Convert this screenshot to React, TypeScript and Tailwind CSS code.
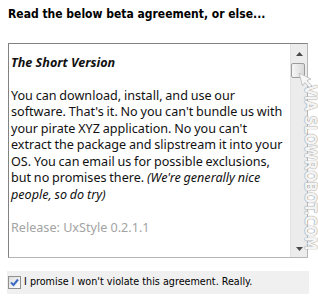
import React from 'react';

const tahoma = { fontFamily: 'Tahoma, "DejaVu Sans Condensed", sans-serif' };
const segoe = { fontFamily: '"Segoe UI", "Noto Sans", sans-serif' };

const lines = [
  'You can download, install, and use our',
  "software. That's it. No you can't bundle us with",
  "your pirate XYZ application. No you can't",
  'extract the package and slipstream it into your',
  'OS. You can email us for possible exclusions,',
];

const App: React.FC = () => {
  return (
    <div className="relative w-[318px] h-[302px] bg-white overflow-hidden">
      {/* Heading */}
      <div className="pl-2 pt-[5px] h-[43px] text-[12px] font-bold text-black" style={tahoma}>
        Read the below beta agreement, or else...
      </div>

      {/* Agreement box */}
      <div className="ml-2 w-[300px] h-[215px] flex overflow-hidden border border-[#b5b5b5] border-t-[#828282] border-l-[#828282]">
        <div className="flex-1 pl-[2px] pt-[11px] text-[12.6px] leading-[16.5px] text-[#111] whitespace-nowrap" style={segoe}>
          <p className="font-bold italic">The Short Version</p>
          <div className="mt-[16px] [word-spacing:-0.5px]">
            {lines.map((l) => (
              <p key={l}>{l}</p>
            ))}
            <p>
              but no promises there. <span className="italic">(We're generally nice</span>
            </p>
            <p className="italic">people, so do try)</p>
          </div>
          <p className="mt-[17px] text-[#a3a3a3]">Release: UxStyle 0.2.1.1</p>
        </div>

        {/* Scrollbar */}
        <div className="w-[17px] flex flex-col bg-[#ececec] border-l border-[#e2e2e2]">
          <div className="h-[19px] flex items-center justify-center">
            <svg width="7" height="4" viewBox="0 0 7 4"><path d="M3.5 0 L7 4 L0 4 Z" fill="#4a4a4a" /></svg>
          </div>
          <div className="mr-[2px] h-[15px] rounded-[2px] border border-[#9c9c9c] bg-gradient-to-r from-[#f6f6f6] to-[#d9d9d9]" />
          <div className="flex-1" />
          <div className="h-[17px] flex items-center justify-center">
            <svg width="7" height="4" viewBox="0 0 7 4"><path d="M0 0 L7 0 L3.5 4 Z" fill="#4a4a4a" /></svg>
          </div>
        </div>
      </div>

      {/* Checkbox strip */}
      <div className="mt-[13px] ml-[7px] w-[302px] h-[23px] bg-[#f0f0f0] flex items-center gap-[3px] pl-[1px]">
        <div className="w-[13px] h-[13px] border border-[#8e8f8f] bg-gradient-to-br from-[#dedede] to-white flex items-center justify-center">
          <svg width="9" height="9" viewBox="0 0 9 9"><path d="M1 4.5 L3.5 7 L8 1.5" stroke="#3d6cc4" strokeWidth="2" fill="none" /></svg>
        </div>
        <span className="text-[10.7px] text-black" style={tahoma}>
          I promise I won't violate this agreement. Really.
        </span>
      </div>

      {/* Watermark */}
      <svg className="absolute left-[298px] top-[72px]" width="16" height="18" viewBox="0 0 16 18">
        <path d="M1 1 L13 7 L9 8.5 L14 14 L11.5 16 L7 10.5 L4.5 14 Z" fill="#f6f6f6" stroke="#c4c4c4" strokeWidth="1" />
      </svg>
      <div
        className="absolute left-[317px] top-[85px] text-[15px] leading-[15px] font-bold text-[#f4f4f4] whitespace-nowrap origin-top-left rotate-90"
        style={{ fontFamily: '"DejaVu Sans Condensed", sans-serif', textShadow: '0 0 1px #8f8f8f, 0 0 1px #8f8f8f' }}
      >
        VIA SLOWROBOT.COM
      </div>
    </div>
  );
};

export default App;
